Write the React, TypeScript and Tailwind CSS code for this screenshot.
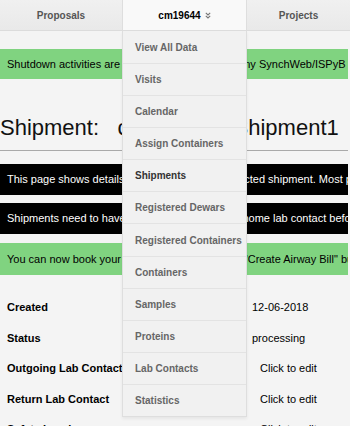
import React from 'react';

const menuItems = [
    'View All Data',
    'Visits',
    'Calendar',
    'Assign Containers',
    'Shipments',
    'Registered Dewars',
    'Registered Containers',
    'Containers',
    'Samples',
    'Proteins',
    'Lab Contacts',
    'Statistics',
];

const details = [
    { label: 'Created', value: '12-06-2018', edit: false },
    { label: 'Status', value: 'processing', edit: false },
    { label: 'Outgoing Lab Contact', value: 'Click to edit', edit: true },
    { label: 'Return Lab Contact', value: 'Click to edit', edit: true },
    { label: 'Safety Level', value: 'Click to edit', edit: true },
];

const App: React.FC = () => {
    return (
        <div className="relative w-[350px] h-[426px] overflow-hidden bg-[#f4f4f4] font-['Liberation_Sans',Arial,sans-serif] text-black">
            {/* top nav */}
            <div className="flex h-[31px] border-b border-[#dcdcdc] bg-gradient-to-b from-[#f0f0f0] to-[#e9e9e9] text-[10px] font-bold">
                <div className="w-[122px] flex items-center justify-center text-[#555]">Proposals</div>
                <div className="w-[125px] flex items-center justify-center gap-1 bg-[#f9f9f9] border-x border-[#dedede]">
                    <span>cm19644</span>
                    <svg width="6" height="7" viewBox="0 0 6 7" className="mt-[1px]">
                        <path d="M0.8 0.8 L3 3 L5.2 0.8 M0.8 3.8 L3 6 L5.2 3.8" fill="none" stroke="#777" strokeWidth="1.1" />
                    </svg>
                </div>
                <div className="flex-1 flex items-center justify-center text-[#555]">Projects</div>
            </div>

            {/* page */}
            <div className="pt-[18px] pr-[2px] text-[11px]">
                <div className="h-[30px] flex items-center pl-[7px] bg-[#80d380] whitespace-nowrap overflow-hidden">
                    Shutdown activities are in progress, do not use any SynchWeb/ISPyB
                </div>

                <h1 className="mt-[36px] text-[22px] leading-[26px] whitespace-pre font-normal text-[#111]">
                    Shipment:   cm19644-1 Shipment1
                </h1>
                <div className="mt-[9px] h-px bg-[#a9a9a9]" />

                <div className="mt-[13px] h-[31px] flex items-center pl-[7px] bg-black text-white whitespace-nowrap overflow-hidden">
                    This page shows details and contents of the selected shipment. Most parameters
                </div>
                <div className="mt-[8px] h-[31px] flex items-center pl-[7px] bg-black text-white whitespace-nowrap overflow-hidden">
                    Shipments need to have an outgoing and return home lab contact before
                </div>
                <div className="mt-[9px] h-[32px] flex items-center pl-[7px] bg-[#80d380] whitespace-nowrap overflow-hidden">
                    You can now book your shipment by clicking the "Create Airway Bill" button
                </div>

                <div className="mt-[17px]">
                    {details.map((d, i) => (
                        <div key={i} className="flex h-[30.5px] items-center">
                            <div className="w-[252px] pl-[7px] font-bold">{d.label}</div>
                            <div className={d.edit ? 'pl-[8px]' : ''}>{d.value}</div>
                        </div>
                    ))}
                </div>
            </div>

            {/* dropdown menu */}
            <div className="absolute left-[122px] top-[31px] w-[125px] bg-[#f1f1f1] border-x border-b border-[#dedede] shadow-[0_2px_3px_rgba(0,0,0,0.06)]">
                {menuItems.map((item, i) => (
                    <div
                        key={i}
                        className={`h-[32.08px] flex items-center pl-[12px] text-[10px] font-bold whitespace-nowrap ${i > 0 ? 'border-t border-[#e3e3e3]' : ''} ${item === 'Shipments' ? 'text-[#333]' : 'text-[#666]'}`}
                    >
                        {item}
                    </div>
                ))}
            </div>
        </div>
    );
};

export default App;
